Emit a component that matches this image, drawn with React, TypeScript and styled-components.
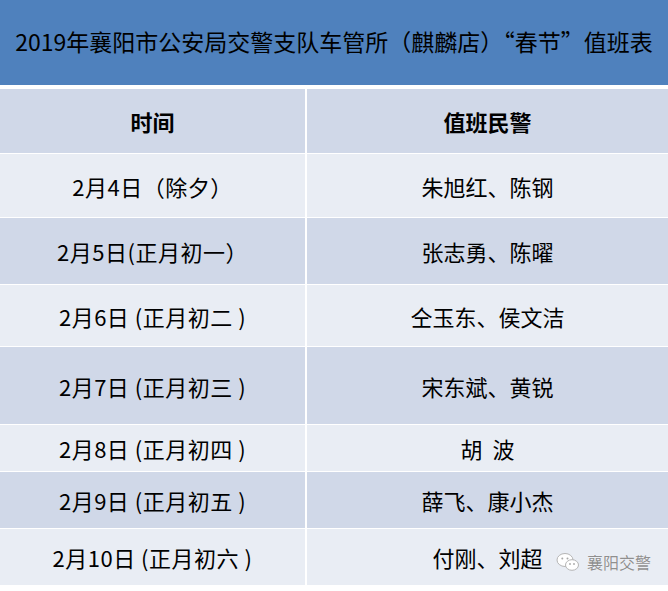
import { Fragment } from 'react';
import styled, { createGlobalStyle } from 'styled-components';

const GlobalStyle = createGlobalStyle`
  html, body {
    margin: 0;
    padding: 0;
    background: #fff;
  }
  body {
    font-family: "Noto Sans CJK SC", "Liberation Sans", sans-serif;
    color: #000;
  }
`;

const Page = styled.div`
  width: 668px;
  height: 591px;
  background: #fff;
  display: flex;
  flex-direction: column;
  gap: 4px;
`;

const TitleBar = styled.div`
  height: 85px;
  background: #4f81bd;
  display: flex;
  align-items: center;
  justify-content: center;
  font-size: 23px;
  padding-bottom: 4px;
  box-sizing: border-box;
`;

const Table = styled.div`
  display: grid;
  grid-template-columns: 305px 1fr;
  column-gap: 2px;
  row-gap: 1px;
  position: relative;
`;

const Cell = styled.div<{ $h: number; $dark: boolean; $head?: boolean; $wide?: boolean }>`
  height: ${(p) => p.$h}px;
  background: ${(p) => (p.$dark ? '#d0d8e8' : '#e9edf4')};
  display: flex;
  align-items: center;
  justify-content: center;
  font-size: 22px;
  letter-spacing: ${(p) => (p.$wide ? '0.5px' : '0')};
  font-weight: ${(p) => (p.$head ? 700 : 400)};
  white-space: pre;
`;

const Watermark = styled.div`
  position: absolute;
  right: 17px;
  bottom: 11px;
  display: flex;
  align-items: center;
  gap: 7px;
  color: #8f8f8f;
  font-size: 16px;
  text-shadow: 0 0 1px #fff;
`;

const rows = [
  { h: 64, date: '时间', name: '值班民警', head: true },
  { h: 63, date: '2月4日（除夕）', name: '朱旭红、陈钢' },
  { h: 66, date: '2月5日(正月初一）', name: '张志勇、陈曜' },
  { h: 61, date: '2月6日 (正月初二 )', name: '仝玉东、侯文洁' },
  { h: 77, date: '2月7日 (正月初三 )', name: '宋东斌、黄锐' },
  { h: 46, date: '2月8日 (正月初四 )', name: '胡  波' },
  { h: 56, date: '2月9日 (正月初五 )', name: '薛飞、康小杰' },
  { h: 56, date: '2月10日 (正月初六 )', name: '付刚、刘超' },
];

const WeChatIcon = () => (
  <svg width="24" height="20" viewBox="0 0 24 20">
    <ellipse cx="9" cy="8" rx="8" ry="6.5" fill="#fff" stroke="#b5b5b5" strokeWidth="1" />
    <circle cx="6.3" cy="6.5" r="1" fill="#a8a8a8" />
    <circle cx="11.5" cy="6.5" r="1" fill="#a8a8a8" />
    <ellipse cx="16" cy="13" rx="6.5" ry="5.3" fill="#fff" stroke="#b5b5b5" strokeWidth="1" />
    <circle cx="14" cy="12" r="0.9" fill="#a8a8a8" />
    <circle cx="18" cy="12" r="0.9" fill="#a8a8a8" />
  </svg>
);

const App = () => {
  return (
    <Page>
      <GlobalStyle />
      <TitleBar>2019年襄阳市公安局交警支队车管所（麒麟店）“春节”值班表</TitleBar>
      <Table>
        {rows.map((r, i) => (
          <Fragment key={i}>
            <Cell $h={r.h} $dark={i % 2 === 0} $head={r.head} $wide={!r.head}>{r.date}</Cell>
            <Cell $h={r.h} $dark={i % 2 === 0} $head={r.head}>{r.name}</Cell>
          </Fragment>
        ))}
        <Watermark>
          <WeChatIcon />
          襄阳交警
        </Watermark>
      </Table>
    </Page>
  );
};

export default App;
